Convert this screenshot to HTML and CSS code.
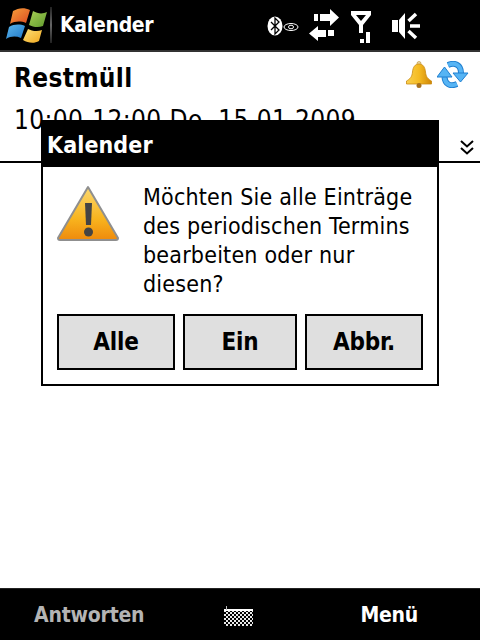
FILE: index.html
```html
<!DOCTYPE html>
<html lang="de">
<head>
    <meta charset="UTF-8">
    <title>Kalender</title>
    <link rel="stylesheet" href="styles.css">
</head>
<body>
    <div class="phone">
        <header class="titlebar">
            <svg class="winlogo" width="48" height="50" viewBox="0 0 48 50">
                <defs>
                    <linearGradient id="paneRed" x1="0" x2="1" y1="0" y2="1">
                        <stop offset="0" stop-color="#f6a03a"/>
                        <stop offset="1" stop-color="#dc4a22"/>
                    </linearGradient>
                    <linearGradient id="paneGreen" x1="0" x2="1" y1="0" y2="1">
                        <stop offset="0" stop-color="#a8cf55"/>
                        <stop offset="1" stop-color="#5f9a2e"/>
                    </linearGradient>
                    <linearGradient id="paneBlue" x1="0" x2="1" y1="0" y2="1">
                        <stop offset="0" stop-color="#5cb6ec"/>
                        <stop offset="1" stop-color="#1f78c8"/>
                    </linearGradient>
                    <linearGradient id="paneYellow" x1="0" x2="1" y1="0" y2="1">
                        <stop offset="0" stop-color="#fde27a"/>
                        <stop offset="1" stop-color="#f2a81e"/>
                    </linearGradient>
                </defs>
                <path d="M11 11 C16 8 22 7 28 10 L24 23 C19 21 13 21 8 24 Z" fill="url(#paneRed)"/>
                <path d="M31 11 C36 14 41 14 45 12 L41 26 C36 28 31 27 27 25 Z" fill="url(#paneGreen)"/>
                <path d="M7 27 C12 24 18 24 23 26 L19 38 C14 36 9 36 4 39 Z" fill="url(#paneBlue)"/>
                <path d="M26 29 C30 31 35 32 40 30 L37 41 C32 44 26 43 21 40 Z" fill="url(#paneYellow)"/>
            </svg>
            <span class="divider"></span>
            <span class="apptitle">Kalender</span>
            <div class="tray">
                <svg class="tray-bt" width="32" height="20" viewBox="0 0 32 20">
                    <ellipse cx="8" cy="10" rx="7.5" ry="9.5" fill="#fff"/>
                    <path d="M4 6 L12 14 L8 18 V2 L12 6 L4 14" fill="none" stroke="#000" stroke-width="1.3"/>
                    <ellipse cx="24" cy="11" rx="7" ry="3.5" fill="none" stroke="#fff" stroke-width="1"/>
                    <ellipse cx="24" cy="11" rx="2.5" ry="1.8" fill="none" stroke="#fff" stroke-width="1"/>
                </svg>
                <svg class="tray-sync" width="30" height="32" viewBox="0 0 30 32">
                    <path d="M5 5 H9 V12 H5 Z M11 5 H21 V0 L30 8.5 L21 17 V12 H11 Z" fill="#fff"/>
                    <path d="M0 24.5 L9 17 V21 H17 V28 H9 V32 Z M19 21 H25 V27 H19 Z" fill="#fff"/>
                </svg>
                <svg class="tray-signal" width="20" height="33" viewBox="0 0 20 33">
                    <path d="M0 0 H20 V4 L12 14 V22 H8 V14 L0 4 Z M5 4 L10 10 L15 4 Z" fill="#fff" fill-rule="evenodd"/>
                    <path d="M9 28 H13 V32 H9 Z M15 21 H19 V32 H15 Z" fill="#fff"/>
                </svg>
                <svg class="tray-sound" width="28" height="28" viewBox="0 0 28 28">
                    <path d="M0 8 H6 V20 H0 Z M7 8 L13 1 V27 L7 20 Z" fill="#fff"/>
                    <path d="M18 14 H28 M16.5 9 L24 2 M16.5 19 L24 26" fill="none" stroke="#fff" stroke-width="3.5"/>
                </svg>
            </div>
        </header>

        <main class="content">
            <div class="detail">
                <div class="subject-row">
                    <h1 class="subject">Restmüll</h1>
                    <div class="flags">
                        <svg width="26" height="27" viewBox="0 0 26 27">
                            <defs>
                                <linearGradient id="bell" x1="0" x2="1" y1="0" y2="0">
                                    <stop offset="0" stop-color="#f9d050"/>
                                    <stop offset="0.5" stop-color="#f5bb22"/>
                                    <stop offset="1" stop-color="#cf8606"/>
                                </linearGradient>
                            </defs>
                            <circle cx="13" cy="2.5" r="2" fill="#e8d9a8" stroke="#b88a2a" stroke-width="0.6"/>
                            <path d="M13 3 C17 3 19 6 19.5 11 C20 16 22 18 25.5 20 V23 H0.5 V20 C4 18 6 16 6.5 11 C7 6 9 3 13 3 Z" fill="url(#bell)" stroke="#c98a12" stroke-width="0.8"/>
                            <circle cx="13" cy="24.5" r="2.5" fill="#a8701c"/>
                        </svg>
                        <svg width="32" height="27" viewBox="0 0 32 27">
                            <path d="M11 4 C18 1 24 4 24 12" fill="none" stroke="#1f7fd0" stroke-width="6"/>
                            <path d="M11 4 C18 1 24 4 24 12" fill="none" stroke="#56b4f4" stroke-width="4"/>
                            <path d="M16 12 H31 L23.5 21 Z" fill="#56b4f4" stroke="#1f7fd0" stroke-width="1"/>
                            <path d="M20 23 C13 26 8 23 7.5 16" fill="none" stroke="#1f7fd0" stroke-width="6"/>
                            <path d="M20 23 C13 26 8 23 7.5 16" fill="none" stroke="#56b4f4" stroke-width="4"/>
                            <path d="M0 16 H15 L7.5 6 Z" fill="#56b4f4" stroke="#1f7fd0" stroke-width="1"/>
                        </svg>
                    </div>
                </div>
                <div class="when">10:00-12:00 Do, 15.01.2009</div>
            </div>
            <div class="rule-row">
                <svg class="chevrons" width="14" height="15" viewBox="0 0 14 15">
                    <path d="M1 1 L7 6.5 L13 1 M1 8 L7 13.5 L13 8" fill="none" stroke="#000" stroke-width="2"/>
                </svg>
            </div>
        </main>

        <div class="dialog">
            <div class="dialog-title">Kalender</div>
            <div class="dialog-body">
                <svg class="warn" width="64" height="58" viewBox="0 0 64 58">
                    <defs>
                        <linearGradient id="warnfill" x1="0" x2="0" y1="0" y2="1">
                            <stop offset="0" stop-color="#fbd870"/>
                            <stop offset="0.6" stop-color="#f8b41e"/>
                            <stop offset="1" stop-color="#ee8a0c"/>
                        </linearGradient>
                    </defs>
                    <path d="M31 2 L61 53 Q61 55 59 55 H3 Q1 55 1 53 Z" fill="url(#warnfill)" stroke="#8f8f8f" stroke-width="2" stroke-linejoin="round"/>
                    <path d="M28 18 H35 L34 40 H29 Z" fill="#444"/>
                    <circle cx="31.5" cy="47" r="4.5" fill="#444"/>
                </svg>
                <p class="message">Möchten Sie alle Einträge des periodischen Termins bearbeiten oder nur diesen?</p>
            </div>
            <div class="dialog-buttons">
                <button class="btn btn-wide">Alle</button>
                <button class="btn btn-narrow">Ein</button>
                <button class="btn btn-wide">Abbr.</button>
            </div>
        </div>

        <footer class="softkeys">
            <span class="softkey softkey-off">Antworten</span>
            <svg class="keyboard" width="29" height="20" viewBox="0 0 29 20">
                <defs>
                    <pattern id="keys" width="4" height="4" patternUnits="userSpaceOnUse">
                        <rect width="4" height="4" fill="#000"/>
                        <rect width="2" height="2" fill="#e8e8e8"/>
                        <rect x="2" y="2" width="2" height="2" fill="#e8e8e8"/>
                    </pattern>
                </defs>
                <rect x="0" y="4" width="29" height="16" fill="url(#keys)"/>
                <rect x="0" y="3" width="29" height="2" fill="#fff"/>
                <rect x="2" y="0" width="1" height="4" fill="#bbb"/>
            </svg>
            <span class="softkey softkey-right">Menü</span>
        </footer>
    </div>
</body>
</html>
```

FILE: styles.css
```css
html, body {
    margin: 0;
    padding: 0;
}
body {
    font-family: "DejaVu Sans", sans-serif;
    font-stretch: condensed;
    background-color: #fff;
    color: #000;
}
.phone {
    position: relative;
    width: 480px;
    height: 640px;
    display: flex;
    flex-direction: column;
    overflow: hidden;
}
.titlebar {
    height: 50px;
    flex-shrink: 0;
    background-color: #000;
    border-bottom: 2px solid #333;
    display: flex;
    align-items: center;
    color: #fff;
}
.winlogo {
    margin-left: 2px;
    flex-shrink: 0;
}
.divider {
    width: 2px;
    height: 36px;
    background: linear-gradient(#222, #666 50%, #222);
}
.apptitle {
    margin-left: 8px;
    font-size: 21px;
    font-weight: bold;
    letter-spacing: -0.3px;
}
.tray {
    margin-left: auto;
    padding-right: 60px;
    display: flex;
    align-items: center;
}
.tray-bt {
    margin-right: 10px;
    margin-top: 1px;
}
.tray-sync {
    margin-right: 12px;
}
.tray-signal {
    margin-right: 21px;
    margin-top: 5px;
}
.tray-sound {
    margin-top: 2px;
}
.content {
    flex: 1;
}
.detail {
    padding: 9px 0 0 14px;
}
.subject-row {
    display: flex;
    justify-content: space-between;
    padding-right: 11px;
}
.subject {
    margin: 0;
    font-size: 26px;
    font-weight: bold;
    line-height: 34px;
    letter-spacing: 0.3px;
}
.flags {
    display: flex;
    align-items: flex-start;
    gap: 5px;
}
.when {
    margin-top: 8px;
    font-size: 26px;
    line-height: 34px;
    letter-spacing: 0.4px;
    white-space: nowrap;
}
.rule-row {
    height: 26px;
    box-sizing: border-box;
    padding: 3px 6px 0 0;
    border-bottom: 2px solid #000;
    display: flex;
    justify-content: flex-end;
}
.dialog {
    position: absolute;
    left: 41px;
    top: 120px;
    width: 394px;
    height: 262px;
    border: 2px solid #000;
    background-color: #fff;
}
.dialog-title {
    height: 45px;
    background-color: #000;
    color: #fff;
    font-size: 23px;
    font-weight: bold;
    line-height: 47px;
    padding-left: 4px;
    letter-spacing: 0.1px;
}
.dialog-body {
    display: flex;
    padding: 16px 10px 0 14px;
}
.warn {
    margin-top: 2px;
    flex-shrink: 0;
}
.message {
    margin: 0 0 0 22px;
    font-size: 23px;
    line-height: 29px;
    letter-spacing: 0.2px;
}
.dialog-buttons {
    display: flex;
    gap: 8px;
    margin-top: 15px;
    padding: 0 14px;
}
.btn {
    height: 56px;
    border: 2px solid #000;
    background-color: #dfdfdf;
    color: #000;
    font-family: "DejaVu Sans", sans-serif;
    font-stretch: condensed;
    font-size: 24px;
    font-weight: bold;
    letter-spacing: -0.2px;
    padding: 0;
}
.btn-wide {
    width: 118px;
}
.btn-narrow {
    width: 114px;
}
.softkeys {
    height: 51px;
    flex-shrink: 0;
    background-color: #000;
    border-top: 1px solid #222;
    display: flex;
    align-items: center;
    color: #fff;
}
.softkey {
    font-size: 21px;
    font-weight: bold;
    letter-spacing: -0.2px;
}
.softkey-off {
    color: #b4b4b4;
    margin-left: 34px;
}
.keyboard {
    margin-left: 80px;
    margin-top: 2px;
    flex-shrink: 0;
}
.softkey-right {
    margin-left: 107px;
}
```
